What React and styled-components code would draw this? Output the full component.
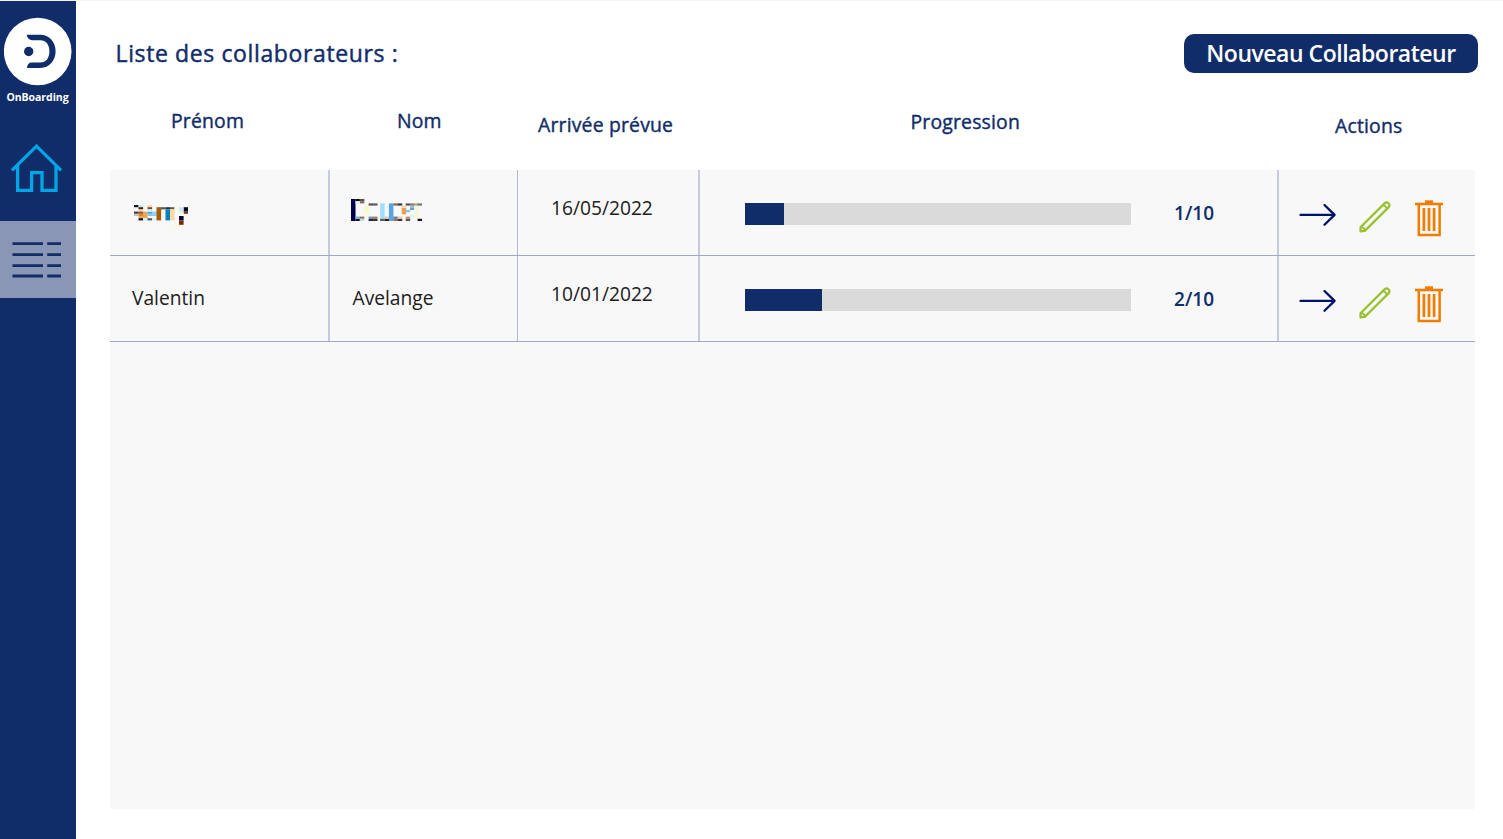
import React from "react";
import styled, { createGlobalStyle } from "styled-components";

const NAVY = "#102d69";

const GlobalStyle = createGlobalStyle`
  *, *::before, *::after { box-sizing: border-box; }
  body { margin: 0; background: #fff; font-family: "Open Sans", "Noto Sans", sans-serif; }
`;

const Page = styled.div`
  display: flex;
  width: 1503px;
  height: 839px;
  overflow: hidden;
  border-top: 1px solid #f3f3f4;
`;

const Sidebar = styled.nav`
  display: flex;
  flex-direction: column;
  flex: 0 0 76px;
  background: ${NAVY};
`;

const Brand = styled.div`
  display: flex;
  flex-direction: column;
  align-items: center;
  height: 126px;
  padding: 16px 1px 0 0;
  svg { display: block; }
`;

const BrandName = styled.span`
  margin-top: 3px;
  color: #fff;
  font-size: 10.5px;
  font-weight: 700;
  line-height: 16px;
  letter-spacing: -0.05px;
  white-space: nowrap;
`;

const NavItem = styled.a`
  display: flex;
  justify-content: center;
  height: ${(p) => p.$height}px;
  padding: ${(p) => p.$top}px 3px 0 0;
  background: ${(p) => (p.$active ? "#8996b5" : "transparent")};
  svg { display: block; }
`;

const Main = styled.main`
  flex: 1;
  display: flex;
  flex-direction: column;
  padding: 33px 28px 30px 34px;
`;

const TopBar = styled.header`
  display: flex;
  justify-content: space-between;
  height: 39px;
  padding-left: 5.5px;
  margin-right: -3px;
`;

const Title = styled.h1`
  margin: 0;
  color: ${NAVY};
  font-size: 23px;
  font-weight: 400;
  line-height: 39px;
  letter-spacing: 0.62px;
  -webkit-text-stroke: 0.45px ${NAVY};
`;

const NewButton = styled.button`
  width: 294px;
  height: 39px;
  padding: 0;
  border: 0;
  border-radius: 10px;
  background: ${NAVY};
  color: #fff;
  font: 600 23px/39px "Open Sans", sans-serif;
  letter-spacing: -0.48px;
  white-space: nowrap;
`;

const columns = "220px 188px 182px 579px 196px";

const HeadRow = styled.div`
  display: grid;
  grid-template-columns: ${columns};
  height: 97px;
`;

const HeadCell = styled.div`
  padding: ${(p) => p.$top}px 0 0 ${(p) => p.$left}px;
  color: ${NAVY};
  font-size: 19.4px;
  font-weight: 400;
  line-height: 28px;
  letter-spacing: 0.18px;
  -webkit-text-stroke: 0.4px ${NAVY};
  white-space: nowrap;
`;

const Panel = styled.section`
  flex: 1;
  background: #f8f8f8;
`;

const Row = styled.div`
  display: grid;
  grid-template-columns: ${columns};
  height: 86px;
  border-bottom: 1px solid #a0a7c7;
`;

const Cell = styled.div`
  display: flex;
  align-items: flex-start;
  padding: ${(p) => p.$top}px 0 0 ${(p) => p.$left}px;
  border-right: 2px solid #c6cadf;
  color: #202020;
  font-size: 19.2px;
  line-height: 28px;
  white-space: nowrap;
  &:nth-child(2) { border-right: 1px solid #b1b7d2; }
  &:last-child { border-right: 0; }
  svg { display: block; flex: none; }
`;

const Track = styled.div`
  width: 386px;
  height: 22px;
  background: #dadada;
`;

const Fill = styled.div`
  height: 100%;
  background: ${NAVY};
`;

const Count = styled.span`
  margin: -4px 0 0 43px;
  color: ${NAVY};
  font-size: 19px;
  font-weight: 600;
`;

const Action = styled.span`
  margin: ${(p) => p.$top}px 0 0 ${(p) => p.$gap}px;
`;

const Logo = () => (
  <svg width="68" height="69" viewBox="0 0 68 69">
    <circle cx="33.7" cy="34.5" r="33.8" fill="#fff" />
    <circle cx="24.7" cy="34.5" r="4.7" fill={NAVY} />
    <path d="M22.6 17.8H36.3C45.3 17.8 51.6 25 51.6 34.3S45.3 51 36.3 51H23C23.3 47.5 24.8 45.6 27.8 45.6H36.3C42.1 45.6 45.4 41 45.4 34.3S42.1 23.2 36.3 23.2H28.3C25.3 23.2 23.3 21.2 22.6 17.8Z" fill={NAVY} />
  </svg>
);

const HomeIcon = () => (
  <svg width="51" height="49" viewBox="0 0 51 49" fill="none" stroke="#00a5e5" strokeWidth="3.3">
    <path d="M1 26.4 25.5 2.2 50 26.4" />
    <path d="M6.6 21.5V46.4H20.6V28.6H31V46.4H45V21.5" />
  </svg>
);

const ListIcon = () => (
  <svg width="50" height="38" viewBox="0 0 50 38" stroke={NAVY} strokeWidth="2.8">
    <path d="M.5 2.7H31M35.2 2.7H49M.5 13.6H31M35.2 13.6H49M.5 24.7H31M35.2 24.7H49M.5 35H31M35.2 35H49" />
  </svg>
);

const ArrowIcon = () => (
  <svg width="38" height="24" viewBox="0 0 38 24" fill="none" stroke="#00126b" strokeWidth="2.3" strokeLinecap="round" strokeLinejoin="round">
    <path d="M1.5 11.9H35.6M25.5 2 35.6 11.9 25.5 21.8" />
  </svg>
);

const PencilIcon = () => (
  <svg width="32" height="32" viewBox="0 0 32 32" fill="none" stroke="#96c22e" strokeWidth="2.2" strokeLinejoin="round">
    <path d="M1.5 26.2 25.8 2.1C28.3.2 31.6 3.3 29.9 5.9L5.8 29.9 1.5 30.3Z" />
    <path d="M24 4.4Q27.2 4.6 27.6 7.8" strokeWidth="1.6" />
    <path d="M1.5 26.2Q5.6 25.8 5.8 29.9" strokeWidth="2" />
  </svg>
);

const TrashIcon = () => (
  <svg width="28" height="37" viewBox="0 0 28 37" fill="none" stroke="#ef7d00">
    <path d="M10 2H18" strokeWidth="3.4" />
    <path d="M0 4H28" strokeWidth="2.6" />
    <path d="M3.8 4V35H24.6V4" strokeWidth="2.5" />
    <path d="M8.9 8V31M14 8V31M19.1 8V31" strokeWidth="2.7" />
  </svg>
);

// Censored names: each block is [column, row, rowSpan, colour].
const firstNameBlocks = [
  [0, 0, 1, "#16141a"], [1, 0, 1, "#c7ecff"], [3, 0, 1, "#ffd9a0"],
  [1, 1, 1, "#41200f"], [3, 1, 1, "#665047"], [1, 2, 1, "#ffd09a"],
  [0, 3, 1, "#3a3634"], [1, 3, 1, "#975320"], [2, 3, 3, "#f3a64e"],
  [3, 3, 1, "#4ba4e5"], [4, 3, 1, "#8ad0fa"], [3, 2, 1, "#d7efff"],
  [0, 4, 1, "#c3c3c3"], [1, 4, 1, "#d98532"], [3, 4, 1, "#80cbf5"],
  [4, 4, 1, "#8ad0fa"], [1, 5, 1, "#f2a45b"], [1, 6, 1, "#121017"],
  [2, 6, 1, "#cceeff"], [3, 6, 1, "#5a5858"], [4, 6, 1, "#d8f1ff"],
  [5, 1, 6, "#a45c06"], [6, 1, 1, "#59595a"], [7, 1, 1, "#29333c"],
  [7, 2, 5, "#087fc0"], [8, 1, 1, "#5c5751"], [8, 2, 5, "#ffd99f"],
  [9, 1, 1, "#f9f9d4"], [11, 1, 2, "#060631"], [11, 3, 1, "#783610"],
  [10, 3, 1, "#fff1c5"], [10, 1, 2, "#c6ebfc"],
  [10, 5, 2, "#080832"], [10, 7, 2, "#7e2605"],
  [9, 9, 1, "#fafaca"],
];

const lastNameBlocks = [
  [0, 0, 10, "#00004b"], [1, 0, 1, "#111116"], [1, 9, 1, "#19171c"],
  [2, 0, 1, "#5b5049"], [2, 1, 1, "#8f674d"], [1, 1, 1, "#d5efff"],
  [2, 8, 1, "#a06b48"], [1, 8, 1, "#76aed2"], [2, 9, 1, "#b7dff6"],
  [3, 3, 1, "#fff2d0"], [3, 4, 3, "#fafac8"], [4, 2, 1, "#555356"],
  [5, 2, 1, "#5e5a5a"], [4, 8, 1, "#5d99c2"], [5, 8, 1, "#ad7c59"],
  [4, 9, 1, "#28282c"], [5, 9, 1, "#3c3532"],
  [6.6, 2, 7, "#a3ddff"], [6.6, 9, 1, "#5b5b5c"], [7.6, 9, 1, "#252429"],
  [7.6, 8, 1, "#d7c9be"], [8.6, 2, 8, "#56a4e3"], [9.6, 2, 1, "#7f6856"],
  [10.6, 2, 1, "#303b46"], [9.6, 8, 1, "#5181a3"], [9.6, 9, 1, "#a26a41"],
  [10.6, 9, 1, "#35353a"], [10.6, 8, 1, "#e7c5a8"],
  [11.5, 4, 3, "#e7a052"], [11.5, 3, 1, "#fbd3a5"], [12.4, 2, 1, "#565257"],
  [12.4, 5, 1, "#81c7f2"], [13.4, 3, 1, "#88bde0"], [13.4, 4, 1, "#57a0d8"],
  [13.4, 2, 1, "#9b7659"], [12.4, 8, 1, "#c09270"], [12.4, 9, 1, "#5e5855"],
  [13.4, 7, 1, "#cff9ff"], [14.3, 3, 6, "#f7f7d8"], [14.3, 2, 1, "#a7a49b"],
  [15.1, 2, 1, "#777476"], [15.1, 9, 1, "#151318"],
];

const Mosaic = ({ blocks, columns: count, width }) => (
  <svg width={width} height="22" viewBox={`0 0 ${count * 4.4} 21.6`} preserveAspectRatio="none" aria-hidden="true">
    {blocks.map(([c, r, span, color], i) => (
      <rect key={i} x={c * 4.4} y={r * 2.16} width="4.5" height={span * 2.16} fill={color} />
    ))}
  </svg>
);

const headings = [
  { label: "Prénom", top: 34, left: 61 },
  { label: "Nom", top: 34, left: 67 },
  { label: "Arrivée prévue", top: 38, left: 20 },
  { label: "Progression", top: 35, left: 210.5 },
  { label: "Actions", top: 39, left: 56 },
];

const people = [
  { date: "16/05/2022", done: 1 },
  { first: "Valentin", last: "Avelange", date: "10/01/2022", done: 2 },
];

const PersonRow = ({ person }) => (
  <Row>
    {person.first ? (
      <Cell $top={28} $left={22}>{person.first}</Cell>
    ) : (
      <Cell $top={35} $left={24}><Mosaic blocks={firstNameBlocks} columns={12} width={54} /></Cell>
    )}
    {person.last ? (
      <Cell $top={28} $left={22.5}>{person.last}</Cell>
    ) : (
      <Cell $top={29} $left={21}><Mosaic blocks={lastNameBlocks} columns={16.1} width={71} /></Cell>
    )}
    <Cell $top={24} $left={33}>{person.date}</Cell>
    <Cell $top={33} $left={45}>
      <Track><Fill style={{ width: `${person.done * 10}%` }} /></Track>
      <Count>{person.done}/10</Count>
    </Cell>
    <Cell $top={30} $left={19.5}>
      <Action $top={3} $gap={0}><ArrowIcon /></Action>
      <Action $top={1} $gap={22.5}><PencilIcon /></Action>
      <Action $top={0} $gap={24}><TrashIcon /></Action>
    </Cell>
  </Row>
);

export default function App() {
  return (
    <>
      <GlobalStyle />
      <Page>
        <Sidebar>
          <Brand>
            <Logo />
            <BrandName>OnBoarding</BrandName>
          </Brand>
          <NavItem $height={94} $top={17}><HomeIcon /></NavItem>
          <NavItem $height={77} $top={20} $active><ListIcon /></NavItem>
        </Sidebar>
        <Main>
          <TopBar>
            <Title>Liste des collaborateurs :</Title>
            <NewButton type="button">Nouveau Collaborateur</NewButton>
          </TopBar>
          <HeadRow>
            {headings.map((h) => (
              <HeadCell key={h.label} $top={h.top} $left={h.left}>{h.label}</HeadCell>
            ))}
          </HeadRow>
          <Panel>
            {people.map((person) => (
              <PersonRow key={person.date} person={person} />
            ))}
          </Panel>
        </Main>
      </Page>
    </>
  );
}
